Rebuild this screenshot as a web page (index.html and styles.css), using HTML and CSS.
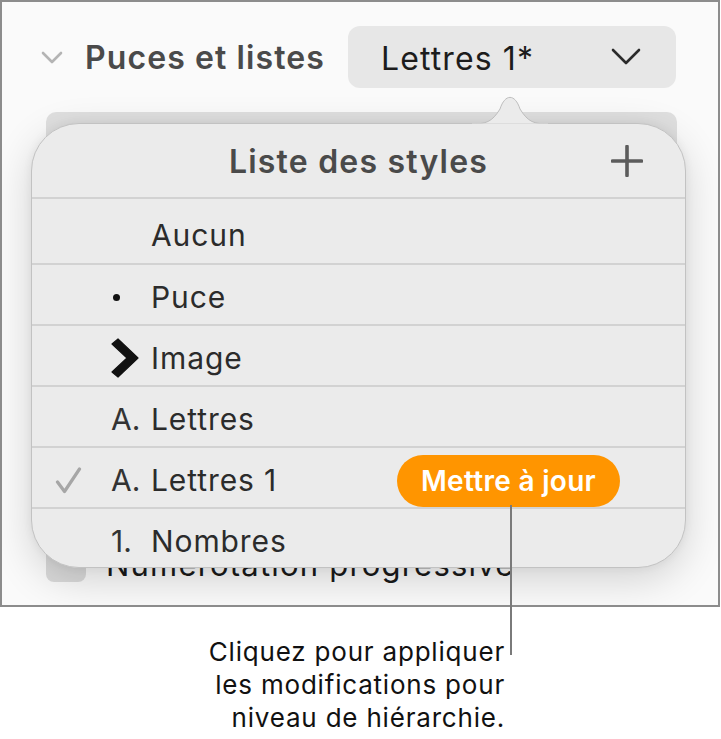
FILE: index.html
```html
<!DOCTYPE html>
<html lang="fr">
<head>
<meta charset="utf-8">
<title>Puces et listes</title>
<link rel="stylesheet" href="styles.css">
</head>
<body>
<div class="frame">
  <div class="head">
    <svg class="disc" width="22" height="13" viewBox="0 0 22 13"><polyline points="2,2 11,11 20,2" fill="none" stroke="#b4b4b4" stroke-width="2.6" stroke-linecap="round" stroke-linejoin="round"/></svg>
    <span class="head-title">Puces et listes</span>
    <div class="select">
      <span class="select-text">Lettres 1*</span>
      <svg width="30" height="18" viewBox="0 0 30 18"><polyline points="2,2 15,15 28,2" fill="none" stroke="#2b2b2b" stroke-width="2.6" stroke-linecap="round" stroke-linejoin="round"/></svg>
    </div>
  </div>
  <div class="under">
    <div class="under-list"></div>
    <div class="under-check"><span class="box"></span><span class="under-label">Numérotation progressive</span></div>
  </div>
  <div class="popover">
    <svg class="pop-arrow" width="76" height="31" viewBox="0 0 76 31"><path d="M0 30 C14 30 20 28 28 15 C33 -0.5 43 -0.5 48 15 C56 28 62 30 76 30 Z" fill="#ebebeb" stroke="#bdbdbd" stroke-width="1"/><rect x="0" y="29.6" width="76" height="2" fill="#ebebeb"/></svg>
    <div class="pop-head">
      <span></span>
      <span class="pop-title">Liste des styles</span>
      <svg class="plus" width="32" height="32" viewBox="0 0 32 32"><path d="M16 1.5V30.5M1.5 16H30.5" stroke="#5c5c5c" stroke-width="3.6" stroke-linecap="round"/></svg>
    </div>
    <ul class="rows">
      <li class="row row-first"><span class="check"></span><span class="marker"></span><span class="label">Aucun</span></li>
      <li class="row"><span class="check"></span><span class="marker"><span class="dot"></span></span><span class="label">Puce</span></li>
      <li class="row"><span class="check"></span><span class="marker"><svg width="28" height="40" viewBox="0 0 28 40"><path d="M1 6 L7 1 L27 20 L7 39 L1 34 L16 20 Z" fill="#111" stroke="#111" stroke-width="1.2" stroke-linejoin="round"/></svg></span><span class="label">Image</span></li>
      <li class="row"><span class="check"></span><span class="marker">A.</span><span class="label">Lettres</span></li>
      <li class="row"><span class="check"><svg width="27" height="27" viewBox="0 0 27 27"><polyline points="2.5,15 9.5,24.5 24.5,2" fill="none" stroke="#a6a6a6" stroke-width="3.2" stroke-linecap="round" stroke-linejoin="round"/></svg></span><span class="marker">A.</span><span class="label">Lettres 1</span><span class="update">Mettre à jour</span></li>
      <li class="row"><span class="check"></span><span class="marker">1.</span><span class="label">Nombres</span></li>
    </ul>
  </div>
</div>
<div class="callout-line"></div>
<p class="callout">Cliquez pour appliquer<br>les modifications pour<br>niveau de hiérarchie.</p>
</body>
</html>
```

FILE: styles.css
```css
* { box-sizing: border-box; }
html, body { margin: 0; padding: 0; background: #ffffff; }
body {
  width: 721px;
  height: 739px;
  overflow: hidden;
  position: relative;
  font-family: Inter, "Noto Sans", sans-serif;
}
.frame {
  position: relative;
  width: 720px;
  height: 607px;
  border: 2px solid #8c8c8c;
  background: #fafafa;
  overflow: hidden;
}
.head {
  display: flex;
  align-items: center;
  padding: 24px 42px 0 39px;
}
.disc { margin-right: 22px; flex: none; }
.head-title {
  font-size: 32px;
  font-weight: 600;
  color: #4a4a4a;
  letter-spacing: 1.1px;
  padding-top: 1px;
}
.select {
  margin-left: auto;
  width: 328px;
  height: 62px;
  border-radius: 12px;
  background: #e7e7e7;
  display: flex;
  align-items: center;
  justify-content: space-between;
  padding: 0 35px 0 33px;
}
.select-text {
  font-size: 32px;
  color: #1c1c1c;
  letter-spacing: 1.1px;
  padding-top: 3px;
}
.under { padding: 24px 0 0 44px; }
.under-list {
  width: 631px;
  height: 406px;
  border-radius: 10px;
  background: #dfdfdf;
}
.under-check {
  display: flex;
  align-items: center;
  margin-top: 22px;
}
.box {
  width: 40px;
  height: 40px;
  border-radius: 8px;
  background: #dadada;
  flex: none;
}
.under-label {
  margin-left: 20px;
  font-size: 31px;
  color: #1a1a1a;
  letter-spacing: 1.2px;
  padding-top: 6px;
}
.popover {
  position: absolute;
  left: 29px;
  top: 121px;
  width: 655px;
  height: 445px;
  background: #ebebeb;
  border: 1px solid #c2c2c2;
  border-radius: 48px;
  box-shadow: 0 12px 40px rgba(0, 0, 0, 0.16), 0 0 10px rgba(0, 0, 0, 0.06);
}
.pop-arrow {
  position: absolute;
  left: 440px;
  top: -30px;
}
.pop-head {
  height: 73px;
  display: grid;
  grid-template-columns: 1fr auto 1fr;
  align-items: center;
}
.pop-title {
  font-size: 32px;
  font-weight: 600;
  color: #4a4a4a;
  letter-spacing: 1.2px;
  padding-top: 1px;
}
.plus { justify-self: end; margin-right: 42px; }
.rows { list-style: none; margin: 0; padding: 0; }
.row {
  height: 61px;
  border-top: 2px solid #d2d2d2;
  display: flex;
  align-items: center;
  padding: 5px 0 0 23px;
  color: #2b2b2b;
  font-size: 30px;
}
.row-first { height: 66px; padding-top: 7px; }
.check {
  width: 56px;
  flex: none;
  display: flex;
  align-items: center;
}
.marker {
  width: 40px;
  flex: none;
  display: flex;
  align-items: center;
  color: #333;
}
.dot {
  width: 7px;
  height: 7px;
  border-radius: 50%;
  background: #111;
  margin-left: 2px;
}
.label { letter-spacing: 0.9px; }
.update {
  margin: 1px 65px 0 auto;
  height: 52px;
  border-radius: 26px;
  background: #ff9500;
  color: #ffffff;
  font-size: 28px;
  font-weight: 600;
  letter-spacing: 0.3px;
  display: flex;
  align-items: center;
  padding: 0 24px;
}
.callout-line {
  position: absolute;
  left: 510px;
  top: 505px;
  width: 2px;
  height: 150px;
  background: #7a7a7a;
}
.callout {
  margin: 28px 0 0 0;
  padding-right: 216px;
  text-align: right;
  font-size: 26px;
  line-height: 33px;
  letter-spacing: 0.8px;
  color: #111;
}
```
